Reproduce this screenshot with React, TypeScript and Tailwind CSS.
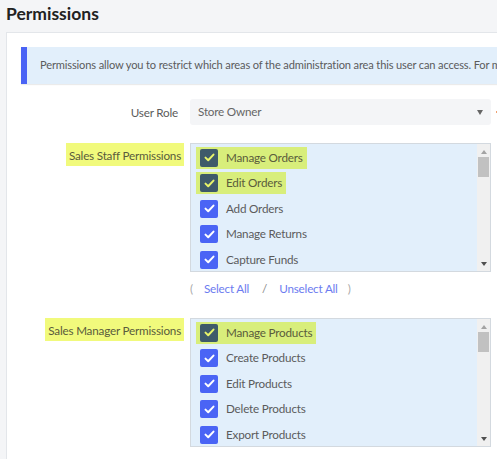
import React from "react";

type Item = { label: string; marked?: boolean };

const staff: Item[] = [
  { label: "Manage Orders", marked: true },
  { label: "Edit Orders", marked: true },
  { label: "Add Orders" },
  { label: "Manage Returns" },
  { label: "Capture Funds" },
];

const manager: Item[] = [
  { label: "Manage Products", marked: true },
  { label: "Create Products" },
  { label: "Edit Products" },
  { label: "Delete Products" },
  { label: "Export Products" },
];

function Check({ marked }: { marked?: boolean }) {
  return (
    <span
      className={
        "flex h-[18px] w-[18px] shrink-0 items-center justify-center rounded-[2px] " +
        (marked ? "bg-[#3e5a6a]" : "bg-[#4a64f5]")
      }
    >
      <svg width="11" height="9" viewBox="0 0 11 9" fill="none">
        <path
          d="M1.5 4.6 4.2 7.2 9.5 1.6"
          stroke={marked ? "#e8f56a" : "#ffffff"}
          strokeWidth="2"
          strokeLinecap="round"
          strokeLinejoin="round"
        />
      </svg>
    </span>
  );
}

function ListBox({ items }: { items: Item[] }) {
  return (
    <div className="flex h-[129px] w-[301px] border border-[#d3d9df] bg-[#e2effb]">
      <div className="flex-1 pl-[5px] pt-[1px]">
        {items.map((it) => (
          <div key={it.label} className="flex h-[25.5px] items-center">
            <div
              className={
                "flex h-[22px] items-center gap-[8px] pl-[4px] pr-[4px] " +
                (it.marked ? "bg-[#d8ee7b]" : "")
              }
            >
              <Check marked={it.marked} />
              <span
                className={
                  "text-[11.7px] tracking-[-0.2px] " +
                  (it.marked ? "text-[#5a5c3c]" : "text-[#5b5b5b]")
                }
              >
                {it.label}
              </span>
            </div>
          </div>
        ))}
      </div>
      <div className="flex w-[13px] flex-col items-center bg-[#f0f0f0]">
        <span className="mt-[6px] h-0 w-0 border-x-[3px] border-b-[4px] border-x-transparent border-b-[#a3a3a3]" />
        <span className="mt-[3px] h-[20px] w-[11px] bg-[#c1c1c1]" />
        <span className="mt-auto mb-[5px] h-0 w-0 border-x-[3.5px] border-t-[4px] border-x-transparent border-t-[#505050]" />
      </div>
    </div>
  );
}

function Label({ text, mark }: { text: string; mark?: boolean }) {
  return (
    <div className="flex justify-end">
      {mark ? (
        <span className="bg-[#f1fa7c] px-[3px] py-[2.5px] text-[11.7px] tracking-[-0.2px] leading-[18px] text-[#5a5c3c]">
          {text}
        </span>
      ) : (
        <span className="pr-[6px] text-[11.7px] tracking-[-0.2px] leading-[26px] text-[#5b5b5b]">
          {text}
        </span>
      )}
    </div>
  );
}

export default function App() {
  return (
    <div
      className="h-[459px] w-[497px] overflow-hidden bg-[#f4f5f7]"
      style={{ fontFamily: "Lato, 'Noto Sans', sans-serif" }}
    >
      <h1 className="pl-[6px] text-[17.5px] font-bold leading-[27px] text-[#222]">
        Permissions
      </h1>
      <div className="ml-[6px] mt-[5px] h-[440px] w-[620px] border border-[#e3e6ea] bg-white pl-[14px] pt-[14px]">
        <div className="flex h-[37px] items-center border-l-[6px] border-[#4a63f5] bg-[#e2effb] pl-[13px] text-[11.1px] tracking-[-0.15px] whitespace-nowrap text-[#5b5b5b] shadow-[0_1px_1px_rgba(0,0,0,0.08)]">
          Permissions allow you to restrict which areas of the administration area this user can access. For more
        </div>
        <div className="-ml-[14px] mt-[15px] grid grid-cols-[177px_1fr] gap-x-[6px]">
          <Label text="User Role" />
          <div className="flex items-center">
            <div className="flex h-[26px] w-[301px] items-center justify-between rounded-[3px] bg-[#f4f5f7] pl-[8px] pr-[8px] text-[11.7px] tracking-[-0.2px] text-[#666]">
              <span>Store Owner</span>
              <span className="h-0 w-0 border-x-[3.5px] border-t-[5px] border-x-transparent border-t-[#666]" />
            </div>
            <span className="ml-[5px] h-[2px] w-[6px] bg-[#f0a070]" />
          </div>

          <div className="mt-[18px]">
            <Label text="Sales Staff Permissions" mark />
          </div>
          <div className="mt-[18px]">
            <ListBox items={staff} />
            <div className="mt-[7px] flex items-center text-[11.7px] tracking-[-0.2px] leading-[18px]">
              <span className="text-[#aaa]">(</span>
              <span className="ml-[11px] text-[#6c7cf0]">Select All</span>
              <span className="ml-[13px] text-[#888]">/</span>
              <span className="ml-[12px] text-[#6c7cf0]">Unselect All</span>
              <span className="ml-[10px] text-[#aaa]">)</span>
            </div>
          </div>

          <div className="mt-[21px]">
            <Label text="Sales Manager Permissions" mark />
          </div>
          <div className="mt-[21px]">
            <ListBox items={manager} />
          </div>
        </div>
      </div>
    </div>
  );
}
